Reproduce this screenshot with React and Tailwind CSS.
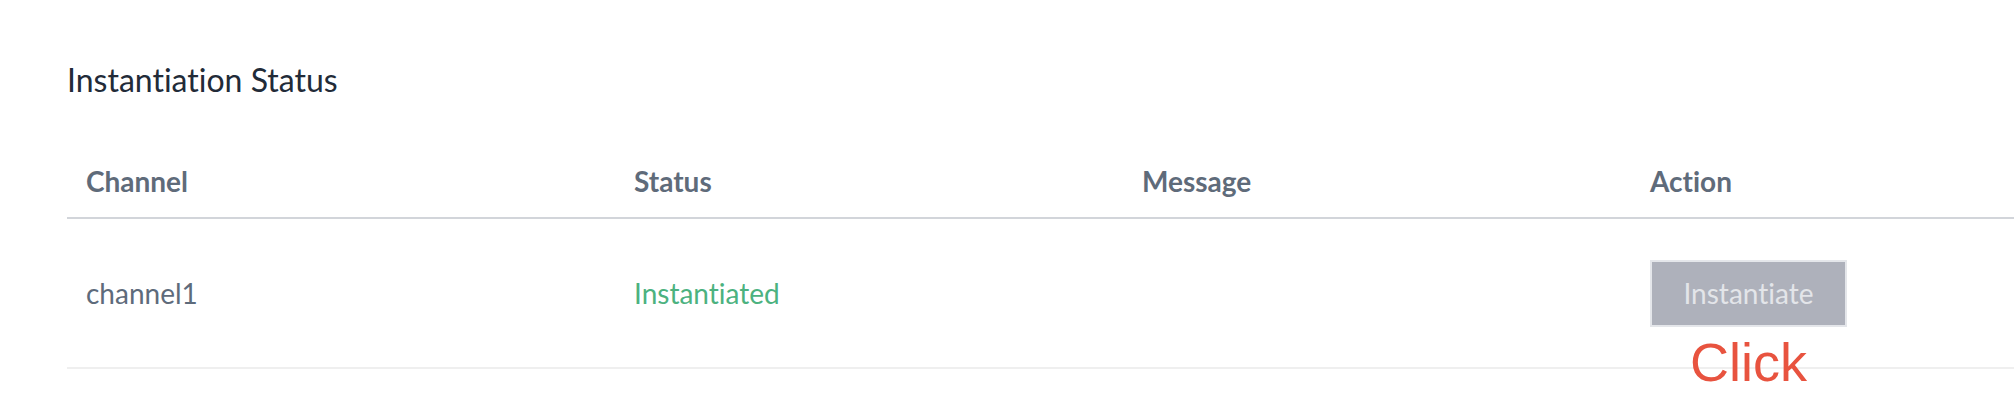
import React from "react";

const rows = [{ channel: "channel1", status: "Instantiated", message: "" }];

const App = () => {
  return (
    <div className="w-[2014px] h-[420px] bg-white pl-[67px] pt-[60px] overflow-hidden font-['Lato',sans-serif] [font-variant-ligatures:none]">
      <h2 className="text-[32px] leading-[40px] text-[#222b38]">Instantiation Status</h2>

      <table className="mt-[44px] w-[1947px] table-fixed border-collapse">
        <thead>
          <tr className="border-b-2 border-[#d2d5da]">
            <th className="w-[548px] h-[74px] pl-[19px] text-left text-[28px] font-bold text-[#5f6b7a]">Channel</th>
            <th className="w-[508px] h-[74px] pl-[19px] text-left text-[28px] font-bold text-[#5f6b7a]">Status</th>
            <th className="w-[508px] h-[74px] pl-[19px] text-left text-[28px] font-bold text-[#5f6b7a]">Message</th>
            <th className="h-[74px] pl-[19px] text-left text-[28px] font-bold text-[#5f6b7a]">Action</th>
          </tr>
        </thead>
        <tbody>
          {rows.map((r) => (
            <tr key={r.channel} className="border-b-2 border-[#efefef]">
              <td className="h-[150px] pl-[19px] text-[28px] text-[#5e6b7b]">{r.channel}</td>
              <td className="h-[150px] pl-[19px] text-[28px] text-[#4cb27f]">{r.status}</td>
              <td className="h-[150px] pl-[19px] text-[28px] text-[#5e6b7b]">{r.message}</td>
              <td className="h-[150px] pl-[19px]">
                <div className="relative inline-block align-middle">
                  <button
                    disabled
                    className="w-[197px] h-[67px] bg-[#aeb1bb] border-2 border-[#e4e6ea] text-[28px] text-[#e3e5e9] cursor-not-allowed"
                  >
                    Instantiate
                  </button>
                  {/* annotation */}
                  <div className="absolute left-0 right-0 top-full mt-[8px] text-center font-['Liberation_Sans',Arial,sans-serif] text-[54px] leading-[54px] text-[#e8533f]">
                    Click
                  </div>
                </div>
              </td>
            </tr>
          ))}
        </tbody>
      </table>
    </div>
  );
};

export default App;
